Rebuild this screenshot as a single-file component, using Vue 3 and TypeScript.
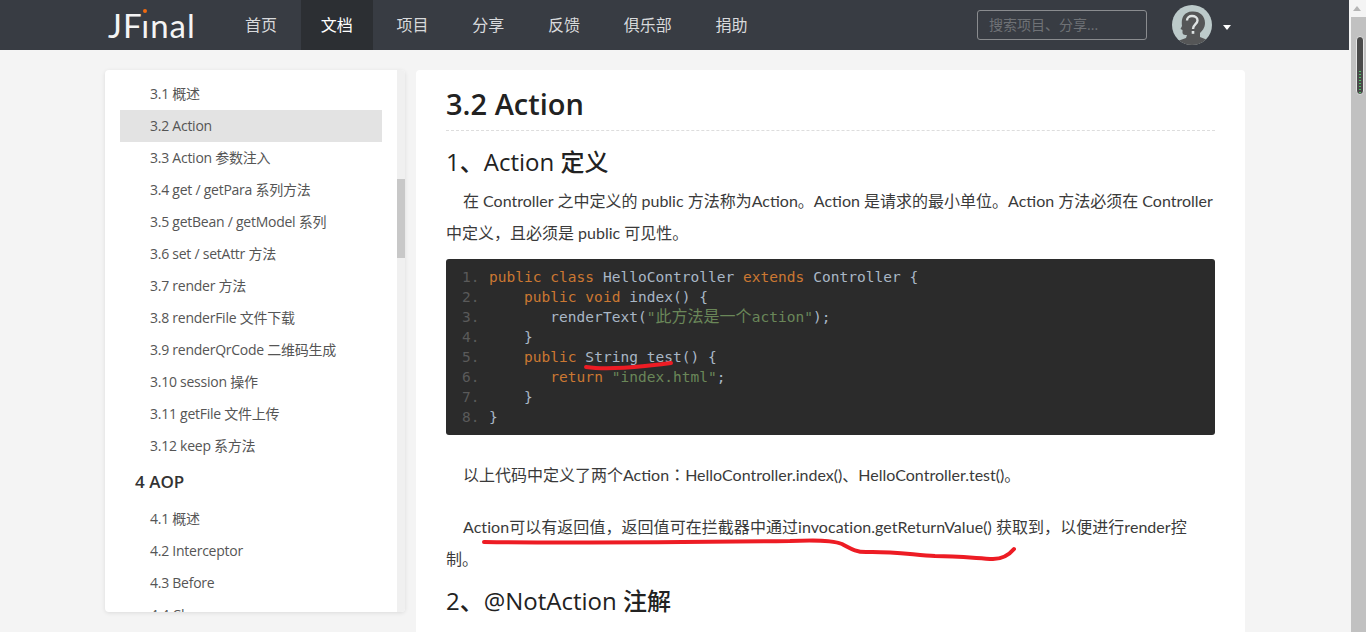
<script setup lang="ts">
const navItems: string[] = ['首页', '文档', '项目', '分享', '反馈', '俱乐部', '捐助']

interface SideRow { text: string; head?: boolean; active?: boolean }
const sideRows: SideRow[] = [
  { text: '3.1 概述' },
  { text: '3.2 Action', active: true },
  { text: '3.3 Action 参数注入' },
  { text: '3.4 get / getPara 系列方法' },
  { text: '3.5 getBean / getModel 系列' },
  { text: '3.6 set / setAttr 方法' },
  { text: '3.7 render 方法' },
  { text: '3.8 renderFile 文件下载' },
  { text: '3.9 renderQrCode 二维码生成' },
  { text: '3.10 session 操作' },
  { text: '3.11 getFile 文件上传' },
  { text: '3.12 keep 系方法' },
  { text: '4 AOP', head: true },
  { text: '4.1 概述' },
  { text: '4.2 Interceptor' },
  { text: '4.3 Before' },
  { text: '4.4 Clear' },
]

const stripes: number[] = [0, 1, 2, 3, 4, 5, 6, 7]
</script>

<template>
  <div class="page">
    <div class="main">
      <header class="topbar">
        <div class="logo">JF<span class="logo-i">ı<i class="logo-dot"></i></span>nal</div>
        <nav class="nav">
          <a v-for="item in navItems" :key="item" class="nav-item" :class="{ on: item === '文档' }">{{ item }}</a>
        </nav>
        <div class="search">搜索项目、分享...</div>
        <svg class="avatar" width="40" height="40" viewBox="0 0 40 40">
          <defs>
            <clipPath id="avatar-clip"><circle cx="20" cy="20" r="20" /></clipPath>
          </defs>
          <g clip-path="url(#avatar-clip)">
            <rect width="40" height="40" fill="#bccaca" />
            <path d="M3 37 L14 33 L15 30 C13 30 11 30 10.5 28 L10.5 25 L8.5 24 L10 21 C9 14 11 7 20 6.500 C28 6 33 11 33 18 C33 23 30 26 28 28 L28 32 L38 36 L38 42 L3 42 Z" fill="#555657" />
            <path d="M15 15.500 C15 12.500 17.500 11 20 11 C23 11 25.500 12.800 25.500 15.500 C25.500 19 21 19.500 21 24" fill="none" stroke="#dfe3e3" stroke-width="2.4" />
            <rect x="19.700" y="26" width="2.600" height="2.800" fill="#dfe3e3" />
          </g>
        </svg>
        <span class="caret"></span>
      </header>

      <div class="layout">
        <aside class="side">
          <div class="side-list">
            <div
              v-for="row in sideRows"
              :key="row.text"
              :class="row.head ? 'side-head' : ['side-row', { active: row.active }]"
            >{{ row.text }}</div>
          </div>
          <div class="side-track"><div class="side-thumb"></div></div>
        </aside>

        <article class="doc">
          <h1 class="doc-title">3.2 Action</h1>
          <h2 class="doc-h2">1、Action 定义</h2>
          <p class="para">在 Controller 之中定义的 public 方法称为Action。Action 是请求的最小单位。Action 方法必须在 Controller<br>中定义，且必须是 public 可见性。</p>
          <div class="code">
            <ol class="gutter"><li v-for="n in 8" :key="n">{{ n }}.</li></ol>
            <pre class="source"><span class="k">public class</span> HelloController <span class="k">extends</span> Controller {
    <span class="k">public void</span> index() {
       renderText(<span class="s">"<span class="cjk">此方法是一个</span>action"</span>);
    }
    <span class="k">public</span> String test() {
       <span class="k">return</span> <span class="s">"index.html"</span>;
    }
}</pre>
          </div>
          <p class="para first-after">以上代码中定义了两个Action<span class="tc">：</span>HelloController.index()、HelloController.test()。</p>
          <p class="para gap">Action可以有返回值，返回值可在拦截器中通过invocation.getReturnValue() 获取到，以便进行render控<br>制。</p>
          <h2 class="doc-h2 second">2、@NotAction 注解</h2>
        </article>
      </div>
    </div>

    <div class="pagebar">
      <div class="pagebar-up"></div>
      <div class="pagebar-track">
        <div class="pagebar-thumb">
          <i v-for="s in stripes" :key="s" class="stripe"></i>
        </div>
      </div>
    </div>

    <svg class="marks" width="1366" height="632" viewBox="0 0 1366 632">
      <path d="M586 367 C600 369 625 368 645 366 C655 365 665 364 671 363" fill="none" stroke="#ed1c24" stroke-width="4" stroke-linecap="round" />
      <path d="M484 542 C560 543 700 542 790 541 C815 540 832 540 842 544 C850 548 855 552 866 552 C890 551 915 555 935 556 C955 556 975 558 993 559 C1003 559 1009 555 1014 549" fill="none" stroke="#ed1c24" stroke-width="4" stroke-linecap="round" stroke-linejoin="round" />
    </svg>
  </div>
</template>

<style>
html, body { margin: 0; overflow: hidden; background: #f4f4f4; }
</style>

<style scoped>
.page {
  position: relative;
  display: flex;
  width: 1366px;
  height: 632px;
  overflow: hidden;
  background: #f4f4f4;
  font-family: "Open Sans", "Noto Sans CJK SC", sans-serif;
  color: #333;
}
.main { width: 1349px; flex: none; }

.topbar {
  display: flex;
  align-items: center;
  height: 50px;
  background: #383c43;
}
.logo {
  width: 117px;
  margin-left: 108px;
  flex: none;
  font-family: "Lato", sans-serif;
  font-weight: 400;
  font-size: 33px;
  letter-spacing: 1px;
  color: #f4f4f4;
}
.logo-i { position: relative; }
.logo-dot {
  position: absolute;
  left: 2px;
  top: 4px;
  width: 4px;
  height: 4px;
  border-radius: 50%;
  background: #f26a0f;
}
.nav { display: flex; gap: 3.75px; flex: none; }
.nav-item {
  height: 50px;
  line-height: 50px;
  padding: 0 20px;
  font-size: 16px;
  color: #d8dadc;
}
.nav-item.on { background: #2c2f33; color: #fff; }
.search {
  box-sizing: border-box;
  width: 170px;
  height: 30px;
  margin-left: 209.500px;
  flex: none;
  padding-left: 11px;
  border: 1px solid #8a8c8f;
  border-radius: 3px;
  font-size: 14px;
  line-height: 28px;
  color: #6f7276;
}
.avatar { margin-left: 25px; flex: none; }
.caret {
  margin-left: 11px;
  margin-top: 5px;
  width: 0;
  height: 0;
  border-left: 4.5px solid transparent;
  border-right: 4.5px solid transparent;
  border-top: 5px solid #fff;
}

.layout {
  display: flex;
  align-items: flex-start;
  gap: 11px;
  padding: 20px 0 0 105px;
}
.side {
  display: flex;
  width: 300px;
  height: 542px;
  flex: none;
  overflow: hidden;
  border-radius: 4px;
  background: #fff;
  box-shadow: 0 1px 4px rgba(0, 0, 0, 0.1);
}
.side-list {
  flex: 1;
  height: 542px;
  overflow: hidden;
  padding: 8px 15px 0;
}
.side-row {
  height: 32px;
  line-height: 31px;
  padding-left: 30px;
  font-size: 14px;
  letter-spacing: -0.25px;
  color: #555;
}
.side-row.active { background: #e3e3e3; }
.side-head {
  height: 41px;
  line-height: 40px;
  padding-left: 15px;
  font-size: 17px;
  font-weight: 600;
  color: #333;
}
.side-track { width: 8px; flex: none; padding-top: 109px; background: #f0f0f0; }
.side-thumb { height: 79px; background: #c8c8c8; }

.doc {
  box-sizing: border-box;
  width: 829px;
  height: 700px;
  flex: none;
  padding: 15px 30px 0;
  border-radius: 4px;
  background: #fff;
}
.doc-title {
  margin: 0;
  height: 46px;
  box-sizing: border-box;
  line-height: 38px;
  font-size: 29px;
  font-weight: 600;
  color: #222;
  border-bottom: 1px dashed #ddd;
}
.doc-h2 {
  margin: 14px 0 6px;
  line-height: 34px;
  font-size: 24px;
  font-weight: 500;
  color: #222;
}
.doc-h2.second { margin-top: 9px; }
.para {
  margin: 0;
  font-family: "Lato", "Noto Sans CJK SC", sans-serif;
  font-size: 16px;
  line-height: 32px;
  text-indent: 17px;
  white-space: nowrap;
  color: #3a3a3a;
}
.para.first-after { margin-top: 23px; }
.para.gap { margin-top: 20px; letter-spacing: 0.05px; }
.tc { font-family: "Noto Sans CJK TC", sans-serif; }
.code {
  display: flex;
  box-sizing: border-box;
  height: 176px;
  margin-top: 10px;
  padding: 8px 0 0 16px;
  border-radius: 3px;
  background: #2b2b2b;
  font-family: "DejaVu Sans Mono", monospace;
  font-size: 14.5px;
  letter-spacing: 0.03px;
  line-height: 20px;
  color: #a9b7c6;
}
.gutter {
  width: 27px;
  flex: none;
  margin: 0;
  padding: 0;
  list-style: none;
  color: #5a5a5a;
}
.source {
  margin: 0;
  font: inherit;
}
.k { color: #cc7832; }
.s { color: #6a8759; }
.cjk { font-family: "Noto Sans CJK SC", sans-serif; font-size: 16px; line-height: 0; }

.pagebar { width: 17px; flex: none; }
.pagebar-up {
  width: 0;
  height: 0;
  margin: 6px 0 0 4px;
  border-left: 4px solid transparent;
  border-right: 4px solid transparent;
  border-bottom: 5px solid #b5b5b5;
}
.pagebar-track {
  height: 615px;
  margin: 6px 0 0 2px;
  padding: 19px 2px 0 5px;
  box-sizing: border-box;
  background: #c1c1c1;
}
.pagebar-thumb {
  box-sizing: border-box;
  display: flex;
  flex-direction: column;
  justify-content: flex-end;
  gap: 2px;
  height: 59px;
  padding: 0 2px 1px;
  border: 1px solid #e6e6e6;
  border-radius: 4px;
  background: #4a4a4a;
}
.stripe { display: block; height: 1px; background: #4fc368; }

.marks { position: absolute; left: 0; top: 0; pointer-events: none; }
</style>
